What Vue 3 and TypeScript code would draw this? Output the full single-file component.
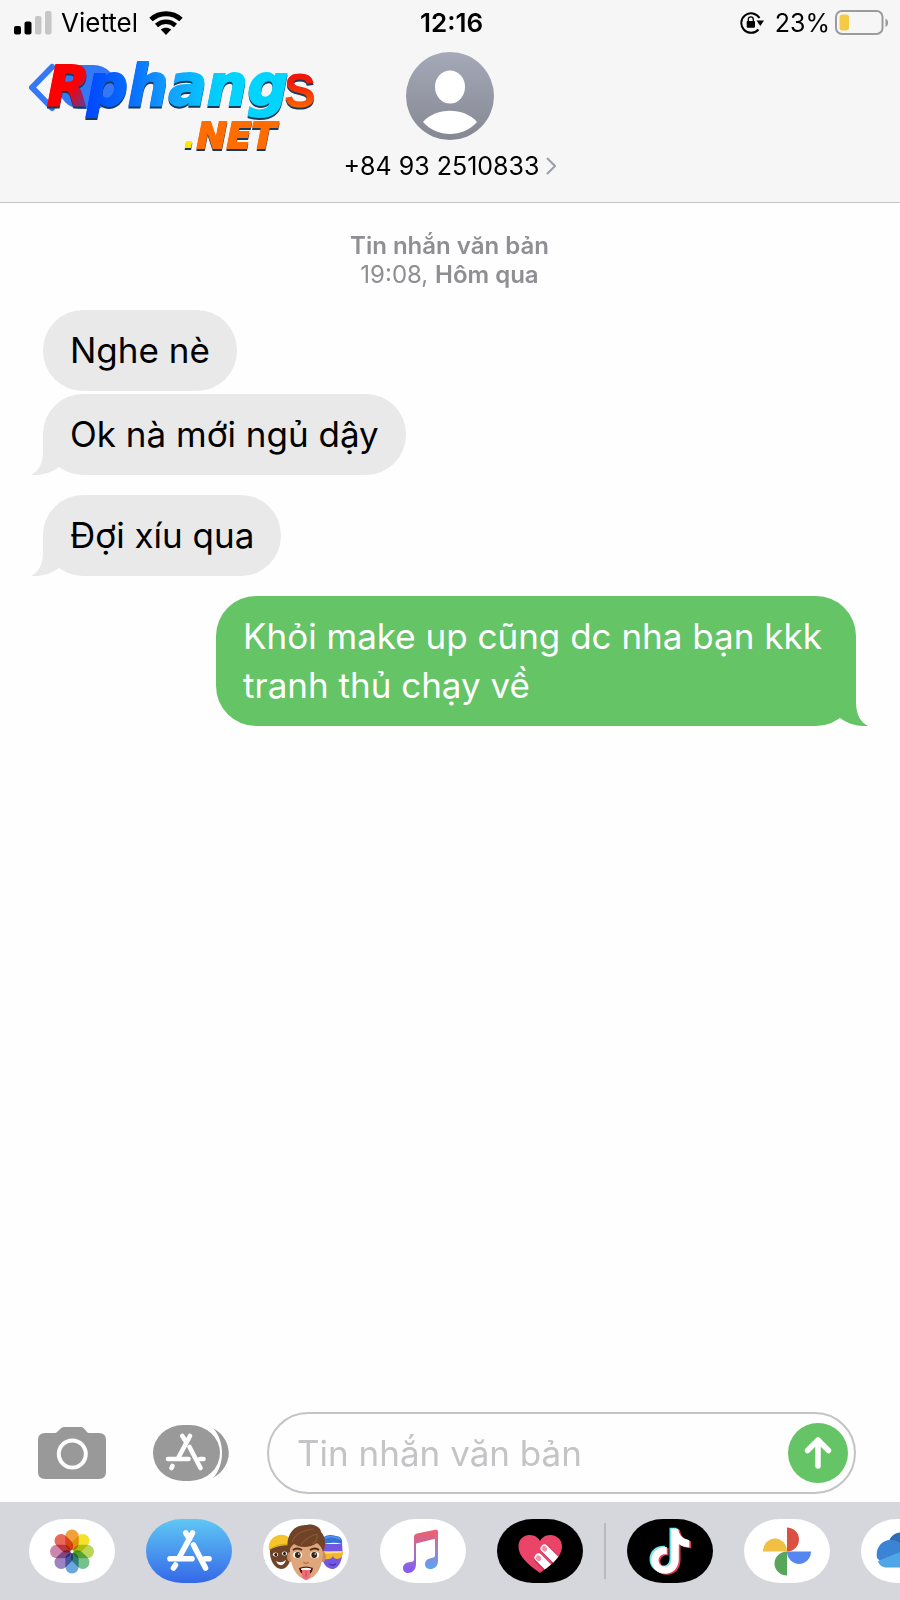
<script setup lang="ts">
import { ref } from 'vue'

interface Message {
  id: number
  text: string
  mine: boolean
  tail: boolean
}

const messages: Message[] = [
  { id: 1, text: 'Nghe nè', mine: false, tail: false },
  { id: 2, text: 'Ok nà mới ngủ dậy', mine: false, tail: true },
  { id: 3, text: 'Đợi xíu qua', mine: false, tail: true },
  { id: 4, text: 'Khỏi make up cũng dc nha bạn kkk tranh thủ chạy về', mine: true, tail: true },
]

const draft = ref('')

const petals: { angle: number; color: string }[] = [
  { angle: 0, color: '#f0a03c' },
  { angle: 45, color: '#f2e22c' },
  { angle: 90, color: '#b9d65a' },
  { angle: 135, color: '#74c28c' },
  { angle: 180, color: '#6ba6dc' },
  { angle: 225, color: '#9d84c0' },
  { angle: 270, color: '#cc86ae' },
  { angle: 315, color: '#e8685a' },
]
</script>

<template>
  <div class="phone">
    <header class="top">
      <div class="status">
        <div class="status-side">
          <svg class="signal" width="38" height="24" viewBox="0 0 38 24" aria-hidden="true">
            <rect x="0" y="15" width="7" height="8.500" rx="2" />
            <rect x="10.500" y="10.500" width="7" height="13" rx="2" />
            <rect x="21" y="5" width="6.500" height="18.500" rx="2" fill="#c6c6c6" />
            <rect x="31" y="0" width="6.500" height="23.500" rx="2" fill="#c6c6c6" />
          </svg>
          <span>Viettel</span>
          <svg class="wifi" width="34" height="24" viewBox="0 0 34 24" aria-hidden="true">
            <path d="M2 8.500C10.500 .8 23.500 .8 32 8.500" fill="none" stroke="#000" stroke-width="5" />
            <path d="M7.500 14.500C13 9.500 21 9.500 26.500 14.500" fill="none" stroke="#000" stroke-width="4.500" />
            <path d="M11.800 18.500C15 16 19 16 22.200 18.500L17 24Z" />
          </svg>
        </div>
        <time class="clock">12:16</time>
        <div class="status-side right">
          <svg class="lock" width="24" height="24" viewBox="0 0 24 24" aria-hidden="true">
            <path d="M19.500 7A9.800 9.800 0 1 0 18.500 18.500" fill="none" stroke="#000" stroke-width="2" />
            <path d="M16.500 9.500H24L20.300 15Z" />
            <rect x="6.700" y="10" width="8.300" height="6.800" rx="1" />
            <path d="M8.300 10.500V8.500a2.500 2.700 0 0 1 5 0v2" fill="none" stroke="#000" stroke-width="1.300" />
          </svg>
          <span>23%</span>
          <svg class="battery" width="54" height="26" viewBox="0 0 54 26" aria-hidden="true">
            <rect x="1" y="1" width="46.500" height="23" rx="6" fill="none" stroke="#9b9b9b" stroke-width="2" />
            <rect x="4.500" y="4.500" width="9.500" height="16" rx="3" fill="#f6ca45" />
            <path d="M50.500 8.500C54 10 54 15.500 50.500 17Z" fill="#9b9b9b" />
          </svg>
        </div>
      </div>

      <div class="contact-row">
        <button class="back" type="button" aria-label="Back">
          <svg width="290" height="100" viewBox="0 0 290 100">
            <defs>
              <linearGradient id="gR" x1="0" y1="0" x2="1" y2="1">
                <stop offset="0.550" stop-color="#ff0000" />
                <stop offset="0.900" stop-color="#4b3fae" />
              </linearGradient>
              <linearGradient id="gP" gradientUnits="userSpaceOnUse" x1="60" y1="0" x2="195" y2="0">
                <stop offset="0" stop-color="#0048ff" />
                <stop offset="0.350" stop-color="#0a72ff" />
                <stop offset="0.600" stop-color="#12a0ff" />
                <stop offset="1" stop-color="#00d4ff" />
              </linearGradient>
              <linearGradient id="gS" x1="0" y1="0" x2="0" y2="1">
                <stop offset="0.450" stop-color="#f01808" />
                <stop offset="0.850" stop-color="#ff6a00" />
              </linearGradient>
            </defs>
            <path d="M24 15L4 35.500L24 56" fill="none" stroke="#3478f6" stroke-width="6" stroke-linecap="round" stroke-linejoin="round" />
            <rect x="31" y="13" width="57" height="44" rx="22" fill="#3478f6" />
            <g class="brand">
              <text x="19" y="53" class="brand-r" fill="url(#gR)" stroke="url(#gR)">R</text>
              <text x="59" y="53" class="brand-word" fill="url(#gP)" stroke="url(#gP)">phang</text>
              <text x="257" y="54" class="brand-s" fill="url(#gS)" stroke="url(#gS)">s</text>
              <text x="155" y="96" class="brand-net"><tspan fill="#ffe600">.</tspan><tspan fill="#ff6d00" stroke="#ff6d00">NET</tspan></text>
            </g>
          </svg>
        </button>

        <button class="contact" type="button">
          <svg width="88" height="88" viewBox="0 0 88 88" aria-hidden="true">
            <defs>
              <linearGradient id="gA" x1="0" y1="0" x2="0" y2="1">
                <stop offset="0" stop-color="#a5a9b8" />
                <stop offset="1" stop-color="#858892" />
              </linearGradient>
            </defs>
            <circle cx="44" cy="44" r="44" fill="url(#gA)" />
            <ellipse cx="44" cy="35" rx="15" ry="16.500" fill="#fff" />
            <path d="M17 70C30 55 58 55 71 70C57 86 31 86 17 70Z" fill="#fff" />
          </svg>
          <span class="number">
            +84 93 2510833
            <svg width="10" height="18" viewBox="0 0 10 18" aria-hidden="true">
              <path d="M1 1L9 9L1 17" fill="none" stroke="#9a9eab" stroke-width="2" />
            </svg>
          </span>
        </button>
      </div>
    </header>

    <main class="thread">
      <p class="stamp"><b>Tin nhắn văn bản</b><br />19:08, <b>Hôm qua</b></p>
      <div
        v-for="m in messages"
        :key="m.id"
        class="bubble"
        :class="{ mine: m.mine, grouped: !m.tail }"
      >
        {{ m.text }}
        <svg v-if="m.tail" class="tail" width="40" height="44" viewBox="0 0 40 44" aria-hidden="true">
          <path d="M12 0V20C12 32 8 40 0 44C11 44.500 20 42 28 36L40 10Z" />
        </svg>
      </div>
    </main>

    <form class="compose" @submit.prevent="draft = ''">
      <button class="tool" type="button" aria-label="Camera">
        <svg width="68" height="54" viewBox="0 0 68 54">
          <path d="M7 7H17C20 7 22 1 26 1H43C47 1 48 7 51 7H61Q68 7 68 14V46Q68 53 61 53H7Q0 53 0 46V14Q0 7 7 7Z" fill="#999" />
          <circle cx="34.300" cy="28" r="13.500" fill="none" stroke="#fff" stroke-width="4" />
        </svg>
      </button>
      <button class="tool" type="button" aria-label="Apps">
        <svg width="76" height="56" viewBox="0 0 76 56">
          <path d="M60 3C81 15 81 41 60 53C72 40 72 16 60 3Z" fill="#999" />
          <rect x="0" y="0" width="67" height="56" rx="30" ry="28" fill="#999" />
          <g fill="none" stroke="#fff" stroke-width="4.600" stroke-linecap="round">
            <path d="M37 11L25.500 32.500M29.300 11L32.500 16M15 34H35.500M47 34H50.500M19.500 41L18.500 43" />
            <path d="M36.500 22L47.500 43" />
          </g>
        </svg>
      </button>
      <div class="field">
        <input v-model="draft" type="text" placeholder="Tin nhắn văn bản" aria-label="Tin nhắn văn bản" />
        <button class="send" type="submit" aria-label="Send">
          <svg width="60" height="60" viewBox="0 0 60 60">
            <circle cx="30" cy="30" r="30" fill="#65c466" />
            <path d="M30 43V18M19.500 27.500L30 17L40.500 27.500" fill="none" stroke="#fff" stroke-width="5.500" stroke-linecap="round" stroke-linejoin="round" />
          </svg>
        </button>
      </div>
    </form>

    <nav class="tray" aria-label="Apps">
      <button class="app" type="button" aria-label="Photos">
        <svg width="86" height="64" viewBox="0 0 86 64">
          <g class="petals">
            <rect
              v-for="p in petals"
              :key="p.angle"
              x="36.300"
              y="10.500"
              width="13.400"
              height="21"
              rx="6.700"
              :fill="p.color"
              :transform="`rotate(${p.angle} 43 32.500)`"
            />
          </g>
          <circle cx="43" cy="32.500" r="1.500" fill="#fff" />
        </svg>
      </button>

      <button class="app store" type="button" aria-label="App Store">
        <svg width="86" height="64" viewBox="0 0 86 64">
          <g fill="none" stroke="#fff" stroke-width="5.600" stroke-linecap="round">
            <path d="M46.500 14L33.500 38M39.800 14L43.500 20M24 39.800H46M59 39.800H63M29.500 46L27.500 49" />
            <path d="M47.500 26L59.500 49" />
          </g>
        </svg>
      </button>

      <button class="app" type="button" aria-label="Memoji">
        <svg width="86" height="64" viewBox="0 0 86 64">
          <path d="M7 30C6 41 12 50 18 50C24 50 28 44 28 34V26H9Z" fill="#6f4327" />
          <path d="M6 31C4 21 13 14 21 16C26 17 28 21 28 27C20 25 12 28 6 31Z" fill="#f4c62c" />
          <path d="M6 31C12 26 20 24 28 26" fill="none" stroke="#d9a51c" stroke-width="1" />
          <ellipse cx="12.500" cy="35.500" rx="2.600" ry="2" fill="#fff" />
          <circle cx="12.800" cy="35.500" r="1.500" fill="#23140b" />
          <ellipse cx="21.500" cy="34.500" rx="2.600" ry="2" fill="#fff" />
          <circle cx="21.500" cy="34.500" r="1.500" fill="#23140b" />
          <path d="M13 42Q18 45 23 41Q21 47 17 46Q14 45 13 42Z" fill="#fff" />
          <path d="M58 25H79C81 40 76 50 69 50C61 49 58 41 58 27Z" fill="#7357e0" />
          <path d="M58 26C57 17 65 14 73 17C77 17 80 20 79 25Q69 22 58 26Z" fill="#3572d6" />
          <path d="M62 19Q69 16 77 20" fill="none" stroke="#5a94ee" stroke-width="1.500" />
          <path d="M60 32H80Q80 40 74 40Q71 40 70 37Q68 41 62 40Z" fill="#f5b52f" />
          <path d="M62 34L79 33" stroke="#ffe07a" stroke-width="1.500" />
          <path d="M66 45Q69 47 73 45" fill="none" stroke="#4b32b5" stroke-width="1.500" />
          <ellipse cx="27" cy="38" rx="3" ry="5" fill="#c98d62" />
          <ellipse cx="60" cy="38" rx="3" ry="5" fill="#c98d62" />
          <path d="M27 28C26 47 34 60 43.500 60C53 60 61 47 60 28L54 18H32Z" fill="#dfa67b" />
          <path d="M25 33C22 17 30 5 44 6C51 4 58 9 58 13C63 18 63 27 60 33C59 29 57 26 54 24C47 29 37 29 31 25C28 27 27 30 25 33Z" fill="#704326" />
          <path d="M29 23C32 15 40 11 51 10M38 26C42 20 47 17 54 15M50 25C54 21 55 18 54 15" fill="none" stroke="#8a5834" stroke-width="1.200" />
          <path d="M30 31Q34 28 39 31M47 31Q52 28 56 31" fill="none" stroke="#4e2b17" stroke-width="1.800" />
          <ellipse cx="34.500" cy="36" rx="4.500" ry="3.300" fill="#fff" />
          <ellipse cx="51.500" cy="36" rx="4.500" ry="3.300" fill="#fff" />
          <circle cx="34.800" cy="36" r="2.900" fill="#352214" />
          <circle cx="51.200" cy="36" r="2.900" fill="#352214" />
          <circle cx="35.800" cy="35" r=".8" fill="#fff" />
          <circle cx="52.200" cy="35" r=".8" fill="#fff" />
          <path d="M40.500 43Q43 46 45.500 43" fill="none" stroke="#b8734b" stroke-width="1.500" />
          <path d="M36 49Q43 46 50 49Q49 56 43 56Q37 56 36 49Z" fill="#4b1719" />
          <path d="M38 49.500Q43 48 48 49.500V51H38Z" fill="#fff" />
          <path d="M39 51H47V57Q46 61 43 61Q40 61 39 57Z" fill="#ee6e78" />
          <path d="M43 52V58" stroke="#c94656" stroke-width="1" />
        </svg>
      </button>

      <button class="app" type="button" aria-label="Music">
        <svg width="86" height="64" viewBox="0 0 86 64">
          <defs>
            <linearGradient id="gM" gradientUnits="userSpaceOnUse" x1="42" y1="10" x2="42" y2="54">
              <stop offset="0" stop-color="#f45f66" />
              <stop offset="0.350" stop-color="#c567a0" />
              <stop offset="0.600" stop-color="#9d6fd0" />
              <stop offset="1" stop-color="#8358f4" />
            </linearGradient>
            <linearGradient id="gN" gradientUnits="userSpaceOnUse" x1="52" y1="14" x2="52" y2="50">
              <stop offset="0" stop-color="#ee6070" />
              <stop offset="0.500" stop-color="#9d83cf" />
              <stop offset="1" stop-color="#5aa4f3" />
            </linearGradient>
          </defs>
          <path d="M34 18Q34 15 37 14.500L54 11L54 20L36 24.500V45C36 51 32 54 28 54C24.500 54 23 51.500 23 49C23 45.500 26 43.500 29 43.200C32.500 43 34 42.500 34 40Z" fill="url(#gM)" />
          <path d="M54 11L56 10.700Q58 10.500 58 13V42C58 47.500 54 50 50.500 50C47 50 45 48 45 45C45 42 47.500 39.800 50.500 39.200C54 38.800 55 38 55 36V20L53 20.300Z" fill="url(#gN)" />
        </svg>
      </button>

      <button class="app dark" type="button" aria-label="Digital Touch">
        <svg width="86" height="64" viewBox="0 0 86 64">
          <defs>
            <clipPath id="heart">
              <path d="M43 54C35 48 21.500 39 21.500 27.500C21.500 20 27 16 32.500 16C38 16 41.500 19 43 22C44.500 19 48 16 53.500 16C59 16 65 20 65 27.500C65 39 51 48 43 54Z" />
            </clipPath>
          </defs>
          <g clip-path="url(#heart)">
            <rect x="20" y="14" width="48" height="42" fill="#ea4468" />
            <g fill="none" stroke-linecap="round">
              <path d="M42 40L54 52" stroke="#c72c4f" stroke-width="9.500" />
              <path d="M41.500 38.500L56 53" stroke="#fff" stroke-width="8" />
              <path d="M48 30L66 48" stroke="#c72c4f" stroke-width="9.500" />
              <path d="M47.500 29.500L66 48" stroke="#fff" stroke-width="8" />
              <path d="M41.300 39L41.800 39.500M47.300 29.500L47.800 30" stroke="#f590aa" stroke-width="5" />
            </g>
          </g>
        </svg>
      </button>

      <span class="divider"></span>

      <button class="app dark" type="button" aria-label="TikTok">
        <svg width="86" height="64" viewBox="0 0 86 64">
          <defs>
            <path id="note" d="M44 9.500H51C51.500 15.500 55.500 20 62 21V28C58 28 54.500 26.800 51.500 24.700V40C51.500 49 45 54.500 38 54.500C30 54.500 24 48.500 24 41C24 32.500 31 27 39.500 27.700V35.200C35 34 31.300 37 31.300 41C31.300 44.700 34.300 47.400 37.900 47.400C41.500 47.400 44 44.600 44 40.500Z" />
          </defs>
          <use href="#note" x="-1.500" y="-.8" fill="#70e9ea" />
          <use href="#note" x="2" y="1.300" fill="#e83f58" />
          <use href="#note" x=".3" y=".3" fill="#fff" />
        </svg>
      </button>

      <button class="app" type="button" aria-label="Google Photos">
        <svg width="86" height="64" viewBox="0 0 86 64">
          <path d="M43 32V8.500A12 12 0 0 1 43 32.500Z" fill="#d95140" />
          <path d="M43 32.500H67A12 12.500 0 0 1 43 32.500Z" fill="#5686ef" />
          <path d="M43 32.500V56.500A12.500 12 0 0 1 43 32.500Z" fill="#58a55c" />
          <path d="M43 32.500H19A12 13 0 0 1 43 32.500Z" fill="#f1bf42" />
        </svg>
      </button>

      <button class="app" type="button" aria-label="OneDrive">
        <svg width="86" height="64" viewBox="0 0 86 64">
          <path d="M28 22C32 11 49 10 54 23L60 34H30Z" fill="#2d6db8" />
          <path d="M16 39C14 29 21 20.500 30 21C36 21 40 24 43 28L58 34L20 43Z" fill="#3b83d4" />
          <path d="M17 42L44 31C49 23 62 24 64 34C73 35 73 48 64 48.500H26C21 48.500 18 46 17 42Z" fill="#4fa6e6" />
        </svg>
      </button>
    </nav>
  </div>
</template>

<style>
body {
  margin: 0;
  background: #fff;
}
</style>

<style scoped>
.phone {
  display: flex;
  flex-direction: column;
  min-height: 100vh;
  overflow: hidden;
  background: #fefefe;
  color: #000;
  font-family: Inter, "Noto Sans", sans-serif;
}

button {
  padding: 0;
  border: 0;
  background: none;
  color: inherit;
  font: inherit;
}

svg {
  display: block;
  flex: none;
}

.top {
  box-sizing: border-box;
  height: 203px;
  border-bottom: 1px solid #c6c6c6;
  background: #f6f6f6;
}

.status {
  display: grid;
  grid-template-columns: 1fr auto 1fr;
  align-items: center;
  height: 46px;
  padding: 0 11px 0 14px;
  font-size: 26px;
  line-height: 46px;
}

.status-side {
  display: flex;
  align-items: center;
}

.signal {
  margin-right: 9px;
}

.wifi {
  margin-left: 11px;
}

.right {
  justify-content: flex-end;
  font-size: 25px;
}

.lock {
  margin-right: 11px;
}

.battery {
  margin-left: 5px;
}

.clock {
  font-weight: 600;
}

.contact-row {
  display: grid;
  grid-template-columns: 1fr auto 1fr;
  align-items: start;
  padding: 6px 28px 0;
}

.back {
  justify-self: start;
  width: 290px;
  margin-right: -40px;
}

.back svg {
  overflow: visible;
}

.brand {
  stroke-width: 2px;
  filter: drop-shadow(0 2px 0 #173a5c);
}

.brand-r,
.brand-word,
.brand-net {
  font-family: "DejaVu Sans", sans-serif;
  font-weight: 700;
  font-style: italic;
}

.brand-r {
  font-size: 56px;
}

.brand-word {
  font-size: 57px;
}

.brand-s {
  font-family: "Liberation Sans", sans-serif;
  font-size: 60px;
}

.brand-net {
  font-size: 36px;
}

.contact {
  display: flex;
  flex-direction: column;
  align-items: center;
}

.number {
  display: flex;
  align-items: center;
  gap: 7px;
  margin-top: 11px;
  font-size: 25px;
  line-height: 30px;
}

.thread {
  display: flex;
  flex: 1;
  flex-direction: column;
  align-items: flex-start;
  padding: 28px 44px 24px 43px;
}

.stamp {
  align-self: center;
  margin: 0 0 21px;
  color: #8e8e93;
  font-size: 24px;
  line-height: 29px;
  text-align: center;
}

.stamp b {
  font-weight: 600;
}

.bubble {
  position: relative;
  box-sizing: border-box;
  max-width: 640px;
  margin-bottom: 20px;
  padding: 16px 27px;
  border-radius: 40px;
  background: #e9e9e9;
  font-size: 35px;
  line-height: 49px;
}

.grouped {
  margin-bottom: 3px;
}

.mine {
  align-self: flex-end;
  background: #65c466;
  color: #fff;
}

.tail {
  position: absolute;
  bottom: 0;
  left: -12px;
  fill: #e9e9e9;
}

.mine .tail {
  right: -12px;
  left: auto;
  fill: #65c466;
  transform: scaleX(-1);
}

.compose {
  display: flex;
  align-items: center;
  padding: 0 44px 8px 38px;
}

.tool {
  flex: none;
  margin-right: 47px;
}

.tool + .tool {
  margin-right: 38px;
}

.field {
  display: flex;
  flex: 1;
  align-items: center;
  box-sizing: border-box;
  min-width: 0;
  height: 82px;
  padding: 0 6px 0 28px;
  border: 2px solid #c4c4c6;
  border-radius: 41px;
}

.field input {
  flex: 1;
  min-width: 0;
  padding: 0;
  border: 0;
  outline: 0;
  background: none;
  font: inherit;
  font-size: 35px;
  line-height: 49px;
}

.field input::placeholder {
  color: #c4c4c6;
  opacity: 1;
}

.tray {
  display: flex;
  gap: 31px;
  padding: 17px 0 17px 29px;
  background: #d6d7dc;
}

.app {
  flex: none;
  width: 86px;
  height: 64px;
  overflow: hidden;
  border-radius: 36px / 32px;
  background: #fff;
}

.store {
  background: linear-gradient(#5fc8f5, #3568e8);
}

.dark {
  background: #000;
}

.divider {
  flex: none;
  align-self: center;
  width: 2px;
  height: 56px;
  margin: 0 -10px;
  background: #b9babf;
}

.petals {
  isolation: isolate;
}

.petals rect {
  mix-blend-mode: multiply;
}
</style>
